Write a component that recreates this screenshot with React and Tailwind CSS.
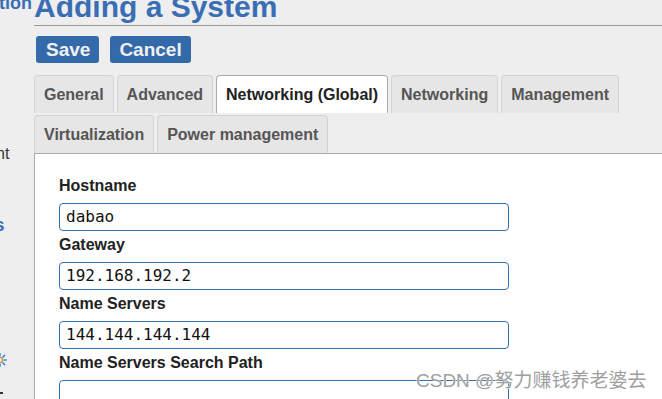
import React from "react";

const tabsRow = [
  { label: "General" },
  { label: "Advanced" },
  { label: "Networking (Global)", active: true },
  { label: "Networking" },
  { label: "Management" },
  { label: "Virtualization" },
  { label: "Power management" },
];

const fields = [
  { label: "Hostname", value: "dabao" },
  { label: "Gateway", value: "192.168.192.2" },
  { label: "Name Servers", value: "144.144.144.144" },
  { label: "Name Servers Search Path", value: "" },
];

export default function App() {
  return (
    <div
      className="relative w-[662px] h-[399px] overflow-hidden bg-[#eeeeee] flex"
      style={{ fontFamily: '"Liberation Sans", Arial, sans-serif' }}
    >
      {/* left sidebar (clipped) */}
      <div className="w-[34px] shrink-0 overflow-hidden flex flex-col">
        <div className="mt-[-6px] ml-[-1px] text-[18px] leading-[18px] font-bold text-[#3a6eb4] whitespace-nowrap">
          tion
        </div>
        <div className="mt-[133px] ml-[-4px] text-[16px] leading-[18px] text-[#333] whitespace-nowrap">
          nt
        </div>
        <div className="mt-[52px] ml-[-6px] text-[19px] leading-[20px] font-bold text-[#3a6eb4] whitespace-nowrap">
          s
        </div>
        <div className="mt-[118px] ml-[-7px]">
          <svg width="14" height="14" viewBox="0 0 14 14">
            <circle cx="7" cy="7" r="2.6" fill="none" stroke="#d08a3a" strokeWidth="1.4" />
            <g stroke="#2f86dd" strokeWidth="1.5" strokeLinecap="round">
              <line x1="7" y1="0.8" x2="7" y2="2.8" />
              <line x1="7" y1="11.2" x2="7" y2="13.2" />
              <line x1="11.2" y1="7" x2="13.2" y2="7" />
              <line x1="10.1" y1="3.9" x2="11.6" y2="2.4" />
              <line x1="10.1" y1="10.1" x2="11.6" y2="11.6" />
            </g>
          </svg>
        </div>
        <div className="mt-[25px] ml-[-2px] w-[5px] h-[2px] bg-[#333]" />
      </div>

      {/* main column */}
      <div className="flex-1 flex flex-col min-w-0">
        <h1 className="mt-[-8px] text-[30px] leading-[30px] font-bold text-[#3a6eb4] pb-[3px] border-b border-[#999] whitespace-nowrap">
          Adding a System
        </h1>

        <div className="mt-[10px] ml-[2px] flex gap-[11px]">
          <button className="h-[27px] pl-[10px] pr-[9px] rounded-[3px] bg-[#346aa9] text-[#f0f0f0] text-[19px] font-bold leading-[27px]">
            Save
          </button>
          <button className="h-[27px] px-[9px] rounded-[3px] bg-[#346aa9] text-[#f0f0f0] text-[19px] font-bold leading-[27px]">
            Cancel
          </button>
        </div>

        <div className="mt-[12px] flex flex-wrap gap-x-[3px] gap-y-[2px]">
          {tabsRow.map((t) => (
            <div
              key={t.label}
              className={
                t.active
                  ? "h-[38px] px-[9px] flex items-center border border-b-0 border-[#aaaaaa] rounded-t-[4px] bg-white text-[16px] font-bold text-[#222] whitespace-nowrap"
                  : "h-[38px] px-[9px] flex items-center border border-b-0 border-[#d3d3d3] rounded-t-[4px] bg-[#e6e6e6] text-[16px] font-bold text-[#555] whitespace-nowrap"
              }
            >
              {t.label}
            </div>
          ))}
        </div>

        <div className="flex-1 bg-white border-t border-l border-[#aaaaaa] pt-[22px] pl-[24px] flex flex-col">
          {fields.map((f) => (
            <div key={f.label} className="flex flex-col mb-[4px]">
              <label className="text-[16px] leading-[20px] font-bold text-[#222] mb-[7px] whitespace-nowrap">
                {f.label}
              </label>
              <div
                className="w-[450px] h-[28px] shrink-0 border border-[#3a6ea8] rounded-[4px] bg-white pl-[6px] flex items-center text-[16px] text-[#111] whitespace-nowrap"
                style={{ fontFamily: '"DejaVu Sans Mono", monospace' }}
              >
                {f.value}
              </div>
            </div>
          ))}
        </div>
      </div>

      {/* watermark */}
      <div
        className="absolute left-[416px] top-[369px] text-[19px] leading-[24px] text-[#a0a0a0] whitespace-nowrap"
        style={{
          fontFamily: '"Liberation Sans", "Noto Sans CJK SC", sans-serif',
          textShadow: "0 0 1px #fff, 0 0 1px #fff",
        }}
      >
        CSDN @努力赚钱养老婆去
      </div>
    </div>
  );
}
